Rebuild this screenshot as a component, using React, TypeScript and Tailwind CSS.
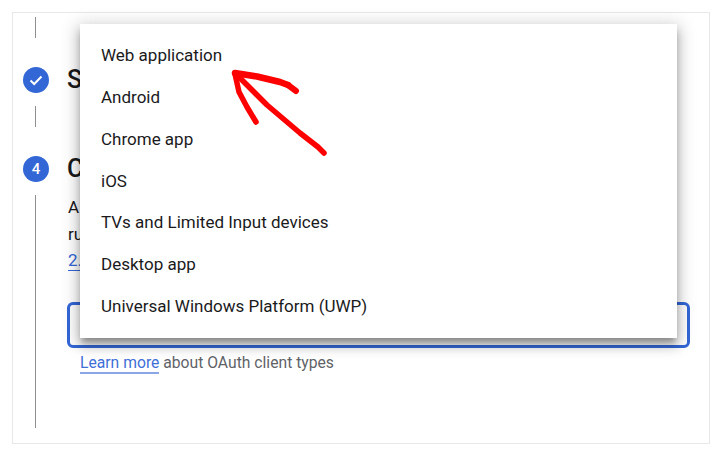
import React from 'react';

const appTypes = [
  'Web application',
  'Android',
  'Chrome app',
  'iOS',
  'TVs and Limited Input devices',
  'Desktop app',
  'Universal Windows Platform (UWP)',
];

const Connector: React.FC<{ className: string }> = ({ className }) => (
  <div className={`ml-[22px] w-px bg-[#8f8f8f] ${className}`} />
);

const App: React.FC = () => {
  return (
    <div className="h-[455px] w-[723px] overflow-hidden bg-white pl-3 pt-3 font-['Roboto',sans-serif] text-[#1a1a1c]">
      <div className="relative h-[432px] w-[698px] border border-[#e8e8e8] pt-1">
        <Connector className="h-[21px]" />

        <div className="ml-[10px] mt-[29px] flex items-center gap-[19px]">
          <div className="flex h-[26px] w-[26px] items-center justify-center rounded-full bg-[#3367d6]">
            <svg width="16" height="16" viewBox="0 0 16 16" fill="none">
              <path d="M2.5 8.5 6.2 12 13.5 4.5" stroke="#fff" strokeWidth="2" />
            </svg>
          </div>
          <h2 className="-ml-px text-[25px] font-medium leading-[26px]">S</h2>
        </div>

        <Connector className="mt-[13px] h-[21px]" />

        <div className="ml-[10px] mt-[29px] flex items-center gap-[19px]">
          <div className="flex h-[26px] w-[26px] items-center justify-center rounded-full bg-[#3367d6] text-[15px] font-medium text-white">
            4
          </div>
          <h2 className="-ml-px text-[25px] font-medium leading-[26px]">C</h2>
        </div>

        <div className="mt-[13px] flex">
          <Connector className="h-[233px] shrink-0" />
          <div className="ml-[31px] w-[623px]">
            <div className="-mt-px pl-px text-[17px] leading-[26.5px]">
              <p>A</p>
              <p>ru</p>
              <p className="w-3 text-[#3367d6] underline underline-offset-4">2.</p>
            </div>
            <div className="mt-[28px] h-[46px] rounded-md border-[3px] border-[#3367d6]" />
            <p className="mt-[3px] pl-[13px] text-[15.7px] leading-6 text-[#5f6368]">
              <span className="border-b-2 border-[#8aa6e6] text-[#3f6fd8]">Learn more</span> about OAuth client types
            </p>
          </div>
        </div>

        <ul className="absolute left-[67px] top-[11px] w-[597px] bg-white pb-[10px] pt-[11px] shadow-[0_6px_6px_-2px_rgba(0,0,0,0.28),0_8px_10px_1px_rgba(0,0,0,0.14),0_3px_16px_3px_rgba(0,0,0,0.18)]">
          {appTypes.map((name) => (
            <li key={name} className="flex h-[41.8px] items-center px-[21px] text-[17px]">
              {name}
            </li>
          ))}
        </ul>

        <svg className="absolute left-[207px] top-[47px]" width="130" height="110" viewBox="0 0 130 110" fill="none">
          <g stroke="#ff0000" strokeLinecap="round" strokeLinejoin="round">
            <path d="M15 13 37 16.5 60 22 68 25" strokeWidth="6.5" />
            <path d="M68 25 76 31" strokeWidth="6" />
            <path d="M15 14 19 32 27 47 36 62" strokeWidth="5.5" />
            <path d="M17 15 47 45 80 73 98 87 104 93" strokeWidth="5.5" />
          </g>
        </svg>
      </div>
    </div>
  );
};

export default App;
